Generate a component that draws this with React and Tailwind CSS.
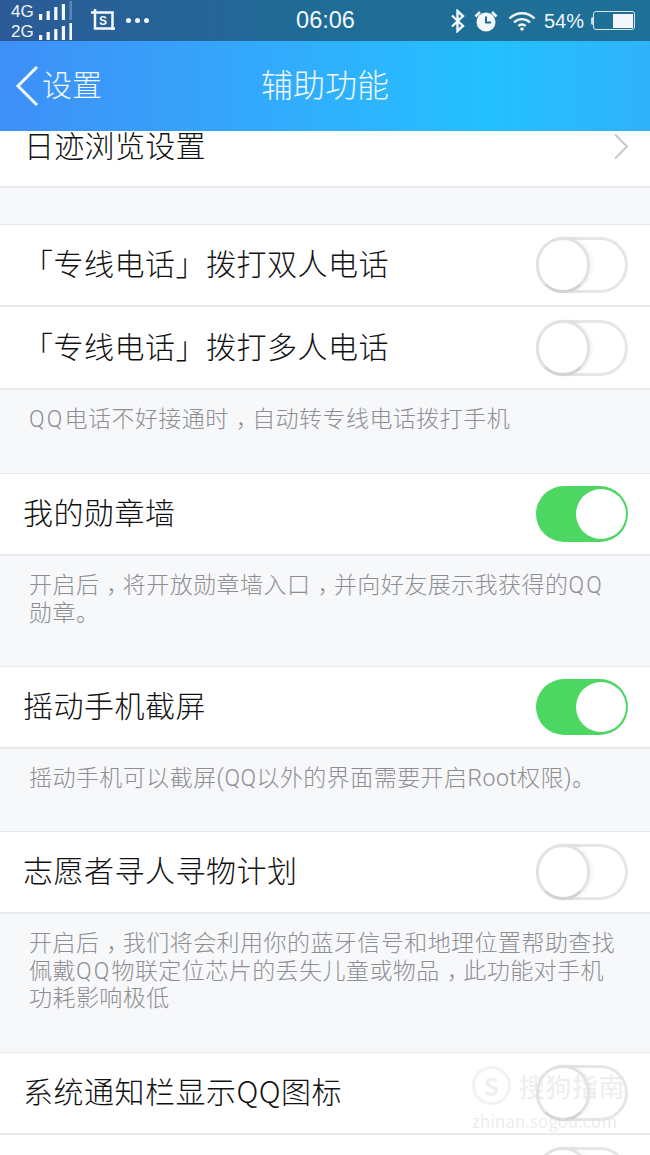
const CJK = "font-['Noto_Sans_CJK_SC',sans-serif]"
const LATIN = "font-['Liberation_Sans','Noto_Sans_CJK_SC',sans-serif]"

function Bars({ top }) {
  const heights = top ? [6, 9, 13, 16, 19] : [5, 8, 11, 14, 17]
  return (
    <svg width="33" height="19" viewBox="0 0 33 19" className="block">
      {heights.map((h, i) => (
        <rect key={i} x={i * 7.6} y={19 - h} width="3.2" height={h} fill={top && i === 4 ? '#5f87b5' : '#f4f8fb'} />
      ))}
    </svg>
  )
}

function ScreenshotIcon() {
  return (
    <svg width="24" height="23" viewBox="0 0 24 23" fill="none" stroke="#f4f8fb" className="block">
      <path d="M0 3.500h21.500V21M4 0v19.500h20" strokeWidth="2.500" />
      <text x="8" y="15.500" fontSize="12" fontWeight="700" fill="#f4f8fb" stroke="none" fontFamily="Liberation Sans">S</text>
    </svg>
  )
}

function StatusBar() {
  return (
    <div className={`h-[41px] shrink-0 flex items-center pl-[11px] pr-[15px] text-[#f2f7fa] bg-gradient-to-r from-[#2b5a97] via-[#1f6c96] to-[#1e7096] ${LATIN}`}>
      <div className="flex items-center flex-1">
        <div className="w-[61px] flex flex-col gap-[2px]">
          <div className="flex items-end h-[18px] justify-between">
            <span className="text-[17px] leading-[16px]">4G</span>
            <Bars top />
          </div>
          <div className="flex items-end h-[18px] justify-between">
            <span className="text-[17px] leading-[16px]">2G</span>
            <Bars />
          </div>
        </div>
        <div className="ml-[19px]"><ScreenshotIcon /></div>
        <div className="ml-[11px] flex gap-[4px]">
          <i className="w-[5px] h-[5px] rounded-full bg-[#f4f8fb]" />
          <i className="w-[5px] h-[5px] rounded-full bg-[#f4f8fb]" />
          <i className="w-[5px] h-[5px] rounded-full bg-[#f4f8fb]" />
        </div>
      </div>
      <span className="text-[23.500px] leading-none w-[60px] text-center ml-[5px]">06:06</span>
      <div className="flex items-center justify-end flex-1">
        <svg width="14" height="24" viewBox="0 0 14 24" fill="none" stroke="#f4f8fb" strokeWidth="2.400" className="block">
          <path d="M1 6.500l11 10.500-5.500 5V2l5.500 5L1 17.500" />
        </svg>
        <svg width="24" height="22" viewBox="0 0 24 22" className="ml-[9px] block">
          <circle cx="12" cy="12" r="9.500" fill="#f4f8fb" />
          <path d="M12 6.500v6h5" fill="none" stroke="#1f6c96" strokeWidth="2" />
          <path d="M1.500 6.500L6 2M22.500 6.500L18 2" stroke="#f4f8fb" strokeWidth="2.500" />
        </svg>
        <svg width="28" height="20" viewBox="0 0 28 20" fill="none" stroke="#f4f8fb" strokeWidth="2.400" className="ml-[10px] block">
          <path d="M1.500 7.500C8.500 .5 19.500 .5 26.500 7.500" />
          <path d="M6 11.500c4.500-4.500 11.500-4.500 16 0" />
          <path d="M10.300 15c2-2 5.400-2 7.400 0" />
          <circle cx="14" cy="18" r="1.800" fill="#f4f8fb" stroke="none" />
        </svg>
        <span className="ml-[8px] text-[20px] leading-none">54%</span>
        <span className="ml-[7px] w-[2px] h-[8px] bg-[#c9dbe6] rounded-l-sm" />
        <div className="w-[42px] h-[19px] border-[1.500px] border-[#d8e6ee] rounded-[3px] p-[1.500px] flex justify-end">
          <div className="w-[20px] bg-[#f4f8fb]" />
        </div>
      </div>
    </div>
  )
}

function NavBar() {
  return (
    <div className={`h-[90px] shrink-0 relative z-10 flex items-center bg-gradient-to-r from-[#3e8ff7] via-[#22c0ff] via-75% to-[#2fb2fa] text-[#f2f8ff] ${CJK}`}>
      <svg width="26" height="42" viewBox="0 0 26 42" fill="none" stroke="#f2f8ff" strokeWidth="3" className="ml-[15px] block">
        <path d="M22 2L3 21l19 19" />
      </svg>
      <span className="ml-[1px] mb-[6px] text-[30px] leading-none font-light">设置</span>
      <span className="absolute inset-x-0 -translate-y-[3px] text-center text-[32px] leading-none font-light">辅助功能</span>
    </div>
  )
}

function Toggle({ on }) {
  if (on) {
    return (
      <div className="w-[92px] h-[56px] rounded-full bg-[#4cd662] flex justify-end items-center pr-[2px]">
        <div className="w-[50px] h-[50px] rounded-full bg-white" />
      </div>
    )
  }
  return (
    <div className="w-[92px] h-[56px] rounded-full border-[3px] border-[#e6e6e6] bg-white flex items-center">
      <div className="w-[54px] h-[56px] -ml-[3px] rounded-full bg-white border-[3px] border-[#e2e2e2] border-b-[#d2d2d2] shadow-[2px_0_4px_rgba(0,0,0,0.05)]" />
    </div>
  )
}

function SwitchRow({ label, on, bordered }) {
  return (
    <div className={`h-[83px] shrink-0 bg-white flex items-center justify-between pl-[23px] pr-[22px] border-b-2 border-[#e8e9ec] ${bordered ? 'border-t border-t-[#e8e9ec]' : ''}`}>
      <span className="mb-[6px] text-[30px] leading-none font-light tracking-[0.500px] text-[#111111] whitespace-nowrap">{label}</span>
      <Toggle on={on} />
    </div>
  )
}

// 참고 화면의 쉼표는 칸 가운데에 놓인다
function NoteLine({ text, wideQQ }) {
  const parts = text.split('，')
  return (
    <div className="whitespace-nowrap">
      {parts.map((p, i) => (
        <span key={i}>
          {wideQQ
            ? p.split('QQ').map((s, j) => (
                <span key={j}>
                  {j > 0 && <span className="tracking-[2.200px]">QQ</span>}
                  {s}
                </span>
              ))
            : p}
          {i < parts.length - 1 && <span className="ml-[7px] tracking-[-6.550px]">，</span>}
        </span>
      ))}
    </div>
  )
}

function Note({ height, lines, narrow }) {
  return (
    <div className="shrink-0 pl-[29px] pt-[16px] font-['Roboto','Noto_Sans_CJK_SC',sans-serif] text-[23px] leading-[27.500px] font-light text-[#8e8e92] tracking-[0.450px]" style={{ height }}>
      {lines.map((l) => <NoteLine key={l} text={l} wideQQ={!narrow} />)}
    </div>
  )
}

export default function App() {
  return (
    <div className={`w-[650px] h-[1155px] overflow-hidden relative flex flex-col bg-[#f7f8fa] ${CJK}`}>
      <StatusBar />
      <NavBar />

      <div className="h-[57px] shrink-0 bg-white border-b-2 border-[#e8e9ec] flex items-start justify-between pl-[24px] pr-[21px]">
        <span className="text-[30px] leading-[30px] -mt-[2px] font-light tracking-[0.300px] text-[#111111]">日迹浏览设置</span>
        <svg width="16" height="27" viewBox="0 0 16 27" fill="none" stroke="#c8c8cc" strokeWidth="2" className="block mt-[2px]">
          <path d="M2 1.500l12 12-12 12" />
        </svg>
      </div>
      <div className="h-[36px] shrink-0" />

      <SwitchRow bordered label="「专线电话」拨打双人电话" />
      <SwitchRow label="「专线电话」拨打多人电话" />
      <Note height={83} lines={['QQ电话不好接通时，自动转专线电话拨打手机']} />

      <SwitchRow bordered on label="我的勋章墙" />
      <Note height={110} lines={['开启后，将开放勋章墙入口，并向好友展示我获得的QQ', '勋章。']} />

      <SwitchRow bordered on label="摇动手机截屏" />
      <Note narrow height={82} lines={['摇动手机可以截屏(QQ以外的界面需要开启Root权限)。']} />

      <SwitchRow bordered label="志愿者寻人寻物计划" />
      <Note height={138} lines={['开启后，我们将会利用你的蓝牙信号和地理位置帮助查找', '佩戴QQ物联定位芯片的丢失儿童或物品，此功能对手机', '功耗影响极低']} />

      <SwitchRow bordered label="系统通知栏显示QQ图标" />
      <div className="flex-1 bg-white flex justify-end pr-[22px] pt-[12px]">
        <Toggle />
      </div>

      {/* 水印 */}
      <div className="absolute left-[472px] top-[1066px] w-[156px] h-[68px] pointer-events-none blur-[0.6px]">
        <div className="flex items-center gap-[8px]">
          <div className="w-[39px] h-[39px] rounded-full border-[3px] border-[#ececec]/70 flex items-center justify-center text-[24px] leading-none font-bold text-[#e9e9e9]/70">S</div>
          <span className="text-[26px] leading-none font-medium tracking-[0.500px] text-[#e4e4e4]/60">搜狗指南</span>
        </div>
        <div className="text-[17px] leading-none mt-[7px] text-[#e4e4e4]/70 whitespace-nowrap">zhinan.sogou.com</div>
      </div>
    </div>
  )
}
